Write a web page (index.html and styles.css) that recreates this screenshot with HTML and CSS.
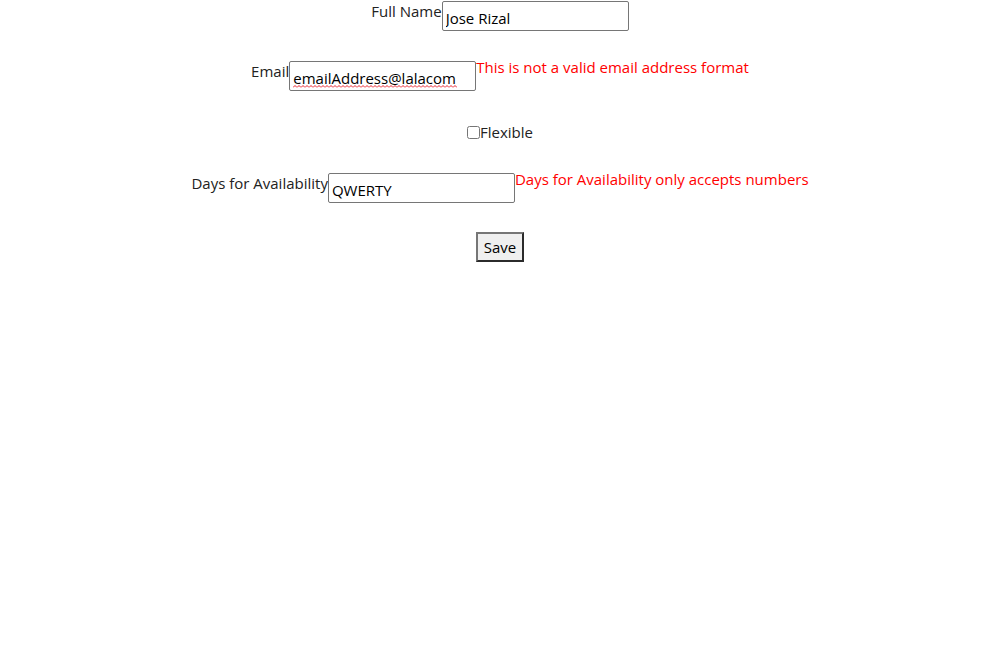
FILE: index.html
```html
<!DOCTYPE html>
<html lang="en">
<head>
<meta charset="utf-8">
<title>Form</title>
<link rel="stylesheet" href="styles.css">
</head>
<body>
<form class="form">
  <div class="row">
    <label class="label" for="name">Full Name</label>
    <input class="field" id="name" type="text" value="Jose Rizal" spellcheck="false">
  </div>
  <div class="row">
    <label class="label" for="email">Email</label>
    <span class="field-wrap">
      <input class="field" id="email" type="text" value="emailAddress@lalacom" spellcheck="false">
      <svg class="squiggle" width="164" height="3" viewBox="0 0 164 3" aria-hidden="true">
        <defs>
          <pattern id="wave" width="4" height="3" patternUnits="userSpaceOnUse">
            <path d="M0 2.5 L2 0.5 L4 2.5" stroke="#e8202a" stroke-width="1" fill="none"/>
          </pattern>
        </defs>
        <rect width="164" height="3" fill="url(#wave)"/>
      </svg>
    </span>
    <span class="error">This is not a valid email address format</span>
  </div>
  <div class="row row-check">
    <input class="check" id="flex" type="checkbox">
    <label class="label" for="flex">Flexible</label>
  </div>
  <div class="row">
    <label class="label" for="days">Days for Availability</label>
    <input class="field" id="days" type="text" value="QWERTY" spellcheck="false">
    <span class="error">Days for Availability only accepts numbers</span>
  </div>
  <div class="row row-save">
    <button class="save" type="button">Save</button>
  </div>
</form>
</body>
</html>
```
FILE: styles.css
```css
html, body {
  margin: 0;
  padding: 0;
  background: #fff;
}
body {
  font-family: "Open Sans", "Noto Sans", sans-serif;
  font-size: 15px;
  color: #222;
}
.form {
  display: flex;
  flex-direction: column;
  gap: 30px;
  padding-top: 1px;
}
.row {
  display: flex;
  justify-content: center;
}
.row-check {
  align-items: center;
  height: 22px;
}
.row-save {
  margin-top: -1px;
}
.label {
  line-height: 21px;
}
.field-wrap {
  position: relative;
  display: flex;
}
.field {
  box-sizing: border-box;
  width: 187px;
  height: 30px;
  margin: 0;
  padding: 3px 3px 0;
  border: 1px solid #767676;
  border-radius: 2px;
  font-family: inherit;
  font-size: 15px;
  color: #000;
  background: #fff;
}
.squiggle {
  position: absolute;
  left: 4px;
  top: 24px;
  pointer-events: none;
}
.error {
  color: #ff0000;
  line-height: 21px;
  margin-top: -4px;
}
.check {
  width: 13px;
  height: 13px;
  margin: 0;
}
.save {
  box-sizing: border-box;
  height: 30px;
  padding: 0 6px;
  margin: 0;
  font-family: inherit;
  font-size: 15px;
  color: #000;
  background: #efefef;
  border: 2px solid;
  border-color: #767676 #2b2b2b #2b2b2b #767676;
  border-radius: 0;
}
```
